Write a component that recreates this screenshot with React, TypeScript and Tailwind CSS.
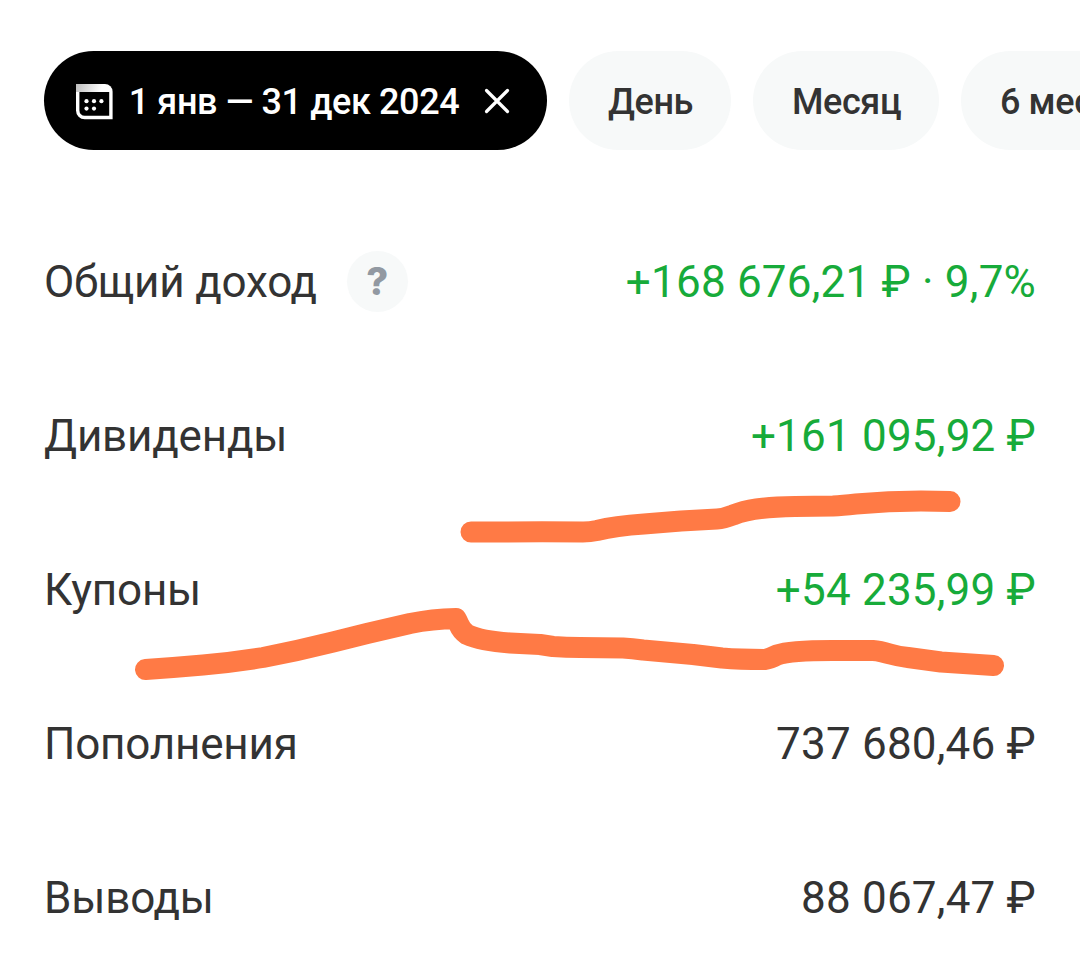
import React from 'react';

interface Row {
  label: string;
  value: string;
  positive?: boolean;
  hint?: boolean;
}

const rows: Row[] = [
  { label: 'Общий доход', value: '+168 676,21 ₽ · 9,7%', positive: true, hint: true },
  { label: 'Дивиденды', value: '+161 095,92 ₽', positive: true },
  { label: 'Купоны', value: '+54 235,99 ₽', positive: true },
  { label: 'Пополнения', value: '737 680,46 ₽' },
  { label: 'Выводы', value: '88 067,47 ₽' },
];

const periods = [
  { label: 'День', width: 'w-[162px]' },
  { label: 'Месяц', width: 'w-[186px]' },
  { label: '6 месяцев', width: 'w-[250px]' },
];

const CalendarIcon: React.FC = () => (
  <svg className="h-9 w-[37px] shrink-0" viewBox="0 0 37 36" fill="none">
    <defs>
      <linearGradient id="calendarTop" x1="0" y1="0" x2="24" y2="9" gradientUnits="userSpaceOnUse">
        <stop offset="0" stopColor="#bdbdbd" />
        <stop offset="1" stopColor="#fff" />
      </linearGradient>
    </defs>
    <path d="M1.7 4V26.500a7 7 0 0 0 7 7H34.900V8" stroke="#fff" strokeWidth="3.4" />
    <path d="M0 0H29a7.6 7.6 0 0 1 7.6 7.6V8H0Z" fill="url(#calendarTop)" />
    <g fill="#fff">
      <circle cx="10.5" cy="17.2" r="2.1" />
      <circle cx="18" cy="17.2" r="2.1" />
      <circle cx="25.4" cy="17.2" r="2.1" />
      <circle cx="10.5" cy="24.600" r="2.1" />
      <circle cx="18" cy="24.600" r="2.1" />
    </g>
  </svg>
);

const CloseIcon: React.FC = () => (
  <svg className="h-7 w-7 shrink-0" viewBox="0 0 28 28" fill="none">
    <path d="M3.5 3.5l21 21M24.5 3.5l-21 21" stroke="#fff" strokeWidth="3.2" strokeLinecap="round" />
  </svg>
);

// Freehand marker lines over the rows
const MarkerStrokes: React.FC = () => (
  <svg
    className="pointer-events-none absolute inset-0 h-[972px] w-[1080px]"
    viewBox="0 0 1080 972"
    fill="none"
    stroke="#ff7a45"
    strokeWidth="21"
    strokeLinecap="round"
    strokeLinejoin="round"
  >
    <path d="M471 532C509 532 540 531.5 583 532Q590 532 597 530.5Q615 526 644 524L681 521L717 519Q724 518.5 733 515C746 509.5 762 507 795 506.5L833 506Q842 505.5 856 504Q889 501 921 501L950 501.5" />
    <path d="M145.500 669.500L173 667.500L203 665Q232 662.500 263 657.500Q297 651 333 642L367 633.500L410 623.500Q432 619 456 618.500C460 625 459 629 467 634.500Q481 641 510 643L540 644.500L553 646.500Q566 647.500 580 647.500L623 648Q632 648.500 643 650L693 654.500L722 658Q740 659.500 765 659.500Q770 658.500 777 655Q790 650.500 832 650.500H873Q880 651 890 654Q899 656.500 908 657.500L941 662L993.500 665.500" />
  </svg>
);

const App: React.FC = () => {
  return (
    <div className="relative h-[972px] w-[1080px] overflow-hidden bg-white font-['Roboto',sans-serif] text-[#333]">
      <div className="flex gap-[22px] pl-11 pt-[51px] text-4xl font-medium tracking-[-0.4px] whitespace-nowrap">
        <button className="flex h-[99px] w-[503px] shrink-0 items-center rounded-full bg-black pt-0.5 pl-8 text-white">
          <CalendarIcon />
          <span className="ml-[15px] w-[332px]">1 янв — 31 дек 2024</span>
          <span className="-mt-0.5 ml-[23px]">
            <CloseIcon />
          </span>
        </button>
        {periods.map((period) => (
          <button
            key={period.label}
            className={`${period.width} h-[99px] shrink-0 rounded-full bg-[#f7f9f9] pt-0.5 pl-[39px] text-left`}
          >
            {period.label}
          </button>
        ))}
      </div>

      <div className="mt-[54px] px-11 text-[44px]">
        {rows.map((row) => (
          <div key={row.label} className="flex h-[154px] items-center justify-between whitespace-nowrap">
            <div className="flex items-center">
              <span className="pt-0.5 tracking-[-0.2px]">{row.label}</span>
              {row.hint && (
                <span className="ml-[30px] flex h-[61px] w-[61px] items-center justify-center rounded-full bg-[#f7f9f9] font-['Inter',sans-serif] text-[38px] font-extrabold text-[#9299a2]">
                  ?
                </span>
              )}
            </div>
            <span className={`pt-0.5 tracking-[0.2px] ${row.positive ? 'text-[#17ab3a]' : ''}`}>{row.value}</span>
          </div>
        ))}
      </div>

      <MarkerStrokes />
    </div>
  );
};

export default App;
